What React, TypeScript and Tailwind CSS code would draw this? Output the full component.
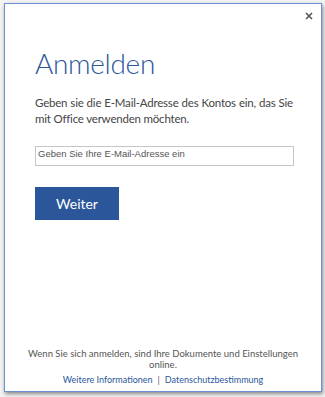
import React from 'react';

export default function App() {
  return (
    <div className="w-[325px] h-[397px] bg-[#f4f4f4] pt-[3px] pl-[4px]" style={{ fontFamily: 'Lato, "Noto Sans", sans-serif' }}>
      <div className="relative w-[318px] h-[389px] bg-white border border-[#6f90d0] shadow-[1px_2px_4px_rgba(0,0,0,0.45)] flex flex-col">
        {/* close */}
        <button className="absolute top-[6px] right-[6px] w-[12px] h-[12px] flex items-center justify-center">
          <svg width="8" height="8" viewBox="0 0 8 8">
            <path d="M1 1 L7 7 M7 1 L1 7" stroke="#555" strokeWidth="1.6" />
          </svg>
        </button>

        <div className="pl-[30px] pr-[26px] pt-[42px]">
          <h1 className="text-[28px] leading-[34px] font-light text-[#2b579a] tracking-[-0.3px]">
            Anmelden
          </h1>

          <p className="mt-[15px] w-[258px] text-[11.5px] leading-[16px] text-[#444] text-justify tracking-[-0.2px]">
            Geben sie die E-Mail-Adresse des Kontos ein, das Sie mit Office verwenden möchten.
          </p>

          <div className="mt-[19px] w-[259px] h-[20px] border border-[#c6c6c6] pl-[2px] pt-[1px]">
            <span className="block text-[9.5px] leading-[12px] text-[#555]" style={{ fontFamily: '"Liberation Sans", Arial, sans-serif' }}>
              Geben Sie Ihre E-Mail-Adresse ein
            </span>
          </div>

          <button className="mt-[21px] w-[84px] h-[33px] bg-[#2b579a] text-white text-[14px] flex items-center justify-center">
            Weiter
          </button>
        </div>

        <div className="mt-auto pb-[6px] text-center text-[9.5px] leading-[11px]">
          <p className="text-[#555] px-[20px]">Wenn Sie sich anmelden, sind Ihre Dokumente und Einstellungen online.</p>
          <p className="mt-[4px] text-[9px] text-[#2b579a]">
            <span>Weitere Informationen</span>
            <span className="text-[#555] mx-[5px]">|</span>
            <span>Datenschutzbestimmung</span>
          </p>
        </div>
      </div>
    </div>
  );
}
